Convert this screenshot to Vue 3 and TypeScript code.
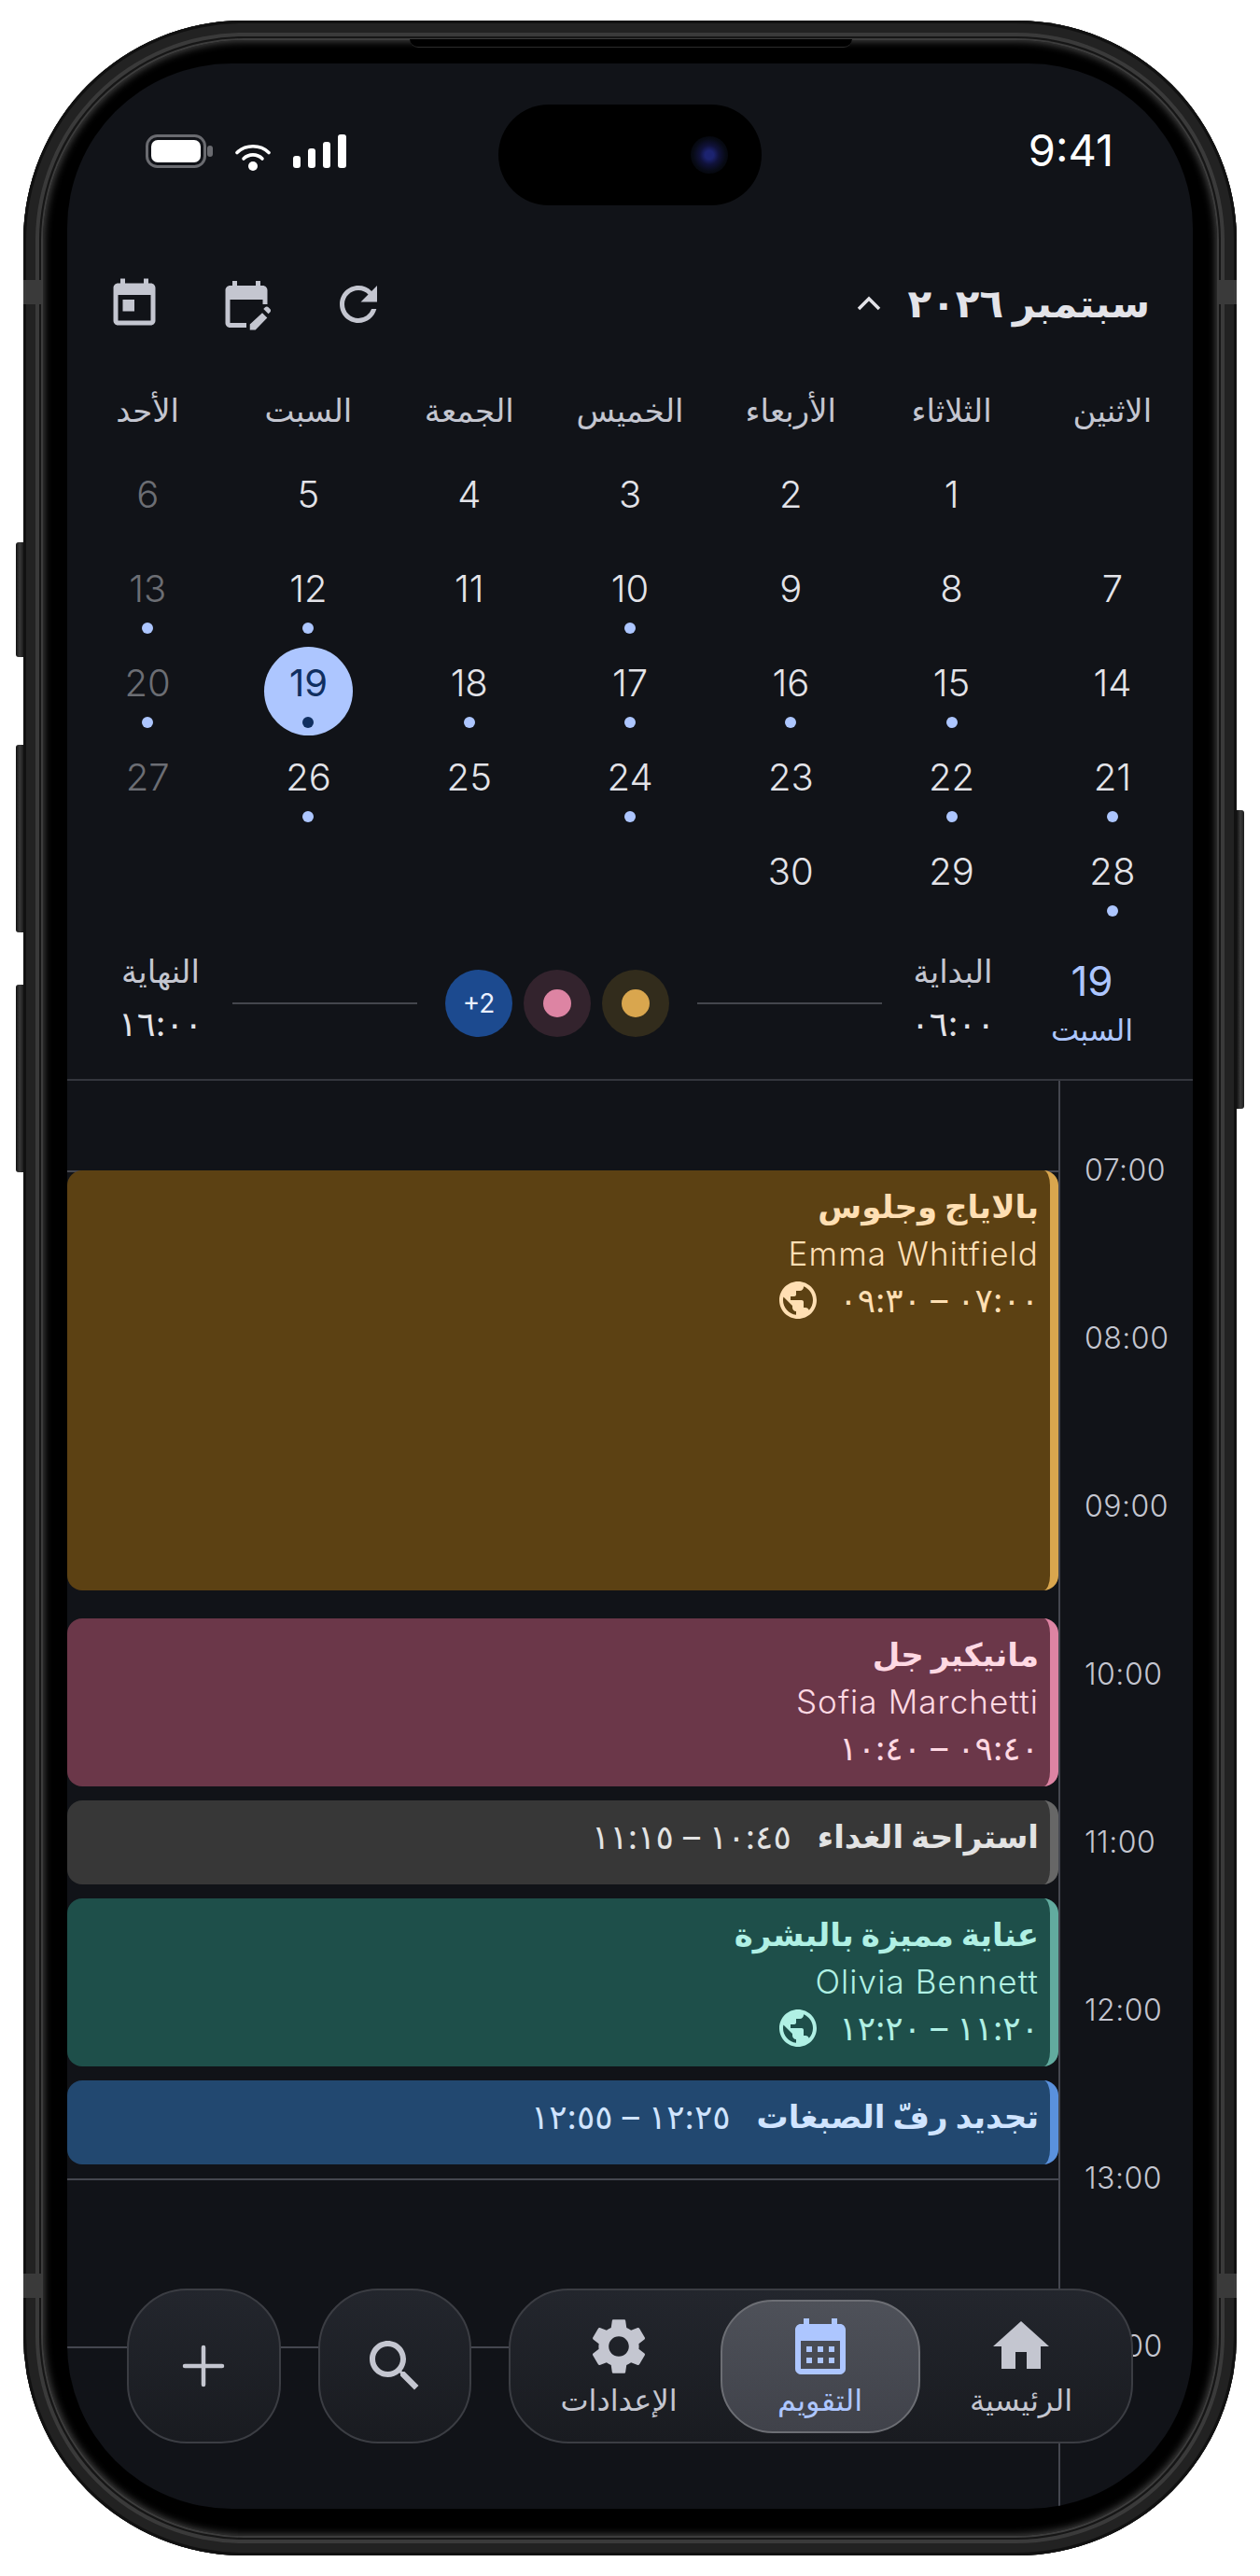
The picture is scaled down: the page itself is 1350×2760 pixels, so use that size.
<script setup lang="ts">
interface CalEvent {
  title: string
  name?: string
  time: string
  start: number
  end: number
  kind: string
  globe?: boolean
}

const weekdays = ['الاثنين', 'الثلاثاء', 'الأربعاء', 'الخميس', 'الجمعة', 'السبت', 'الأحد']
const dotted = [10, 12, 13, 15, 16, 17, 18, 19, 20, 21, 22, 24, 26, 28]
const days: (number | null)[] = [null]
for (let d = 1; d <= 30; d++) days.push(d)

const events: CalEvent[] = [
  { title: 'بالاياج وجلوس', name: 'Emma Whitfield', time: '٠٧:٠٠ – ٠٩:٣٠', start: 420, end: 570, kind: 'amber', globe: true },
  { title: 'مانيكير جل', name: 'Sofia Marchetti', time: '٠٩:٤٠ – ١٠:٤٠', start: 580, end: 640, kind: 'pink' },
  { title: 'استراحة الغداء', time: '١٠:٤٥ – ١١:١٥', start: 645, end: 675, kind: 'gray' },
  { title: 'عناية مميزة بالبشرة', name: 'Olivia Bennett', time: '١١:٢٠ – ١٢:٢٠', start: 680, end: 740, kind: 'teal', globe: true },
  { title: 'تجديد رفّ الصبغات', time: '١٢:٢٥ – ١٢:٥٥', start: 745, end: 775, kind: 'blue' },
]

const hours = ['07:00', '08:00', '09:00', '10:00', '11:00', '12:00', '13:00', '14:00']

function eventStyle(ev: CalEvent, i: number) {
  const prevEnd = i === 0 ? 420 : events[i - 1].end
  return { height: (ev.end - ev.start) * 3 + 'px', marginTop: (ev.start - prevEnd) * 3 + 'px' }
}

const globePath = 'M12 2C6.48 2 2 6.48 2 12s4.48 10 10 10 10-4.48 10-10S17.52 2 12 2zm-1 17.93c-3.95-.49-7-3.85-7-7.93 0-.62.08-1.21.21-1.79L9 15v1c0 1.1.9 2 2 2v1.93zm6.9-2.54c-.26-.81-1-1.39-1.9-1.39h-1v-3c0-.55-.45-1-1-1H8v-2h2c.55 0 1-.45 1-1V7h2c1.1 0 2-.9 2-2v-.41c2.93 1.19 5 4.06 5 7.41 0 2.08-.8 3.97-2.1 5.39z'
</script>

<template>
  <div class="page">
    <div class="phone">
      <span class="side-btn l1"></span>
      <span class="side-btn l2"></span>
      <span class="side-btn l3"></span>
      <span class="side-btn r1"></span>
      <span class="band bl-top"></span>
      <span class="band br-top"></span>
      <span class="band bl-bot"></span>
      <span class="band br-bot"></span>
      <span class="speaker"></span>

      <div class="bezel">
        <div class="screen">
          <div class="island"><span class="camera"></span></div>

          <div class="status">
            <div class="status-icons">
              <svg width="72" height="36" viewBox="0 0 72 36">
                <rect x="1.5" y="1.5" width="62" height="33" rx="11" fill="none" stroke="#6a6b70" stroke-width="3" />
                <rect x="6" y="6" width="53" height="24" rx="7" fill="#fff" />
                <rect x="66" y="12" width="6" height="12" rx="3" fill="#6a6b70" />
              </svg>
              <svg width="38" height="30" viewBox="0 0 38 30">
                <path d="M2 10.5C11 1.500 27 1.500 36 10.500" fill="none" stroke="#fff" stroke-width="3.6" stroke-linecap="round" />
                <path d="M9 17C14.500 11.500 23.500 11.500 29 17" fill="none" stroke="#fff" stroke-width="3.6" stroke-linecap="round" />
                <circle cx="19" cy="25" r="5" fill="#fff" />
              </svg>
              <svg width="57" height="36" viewBox="0 0 57 36">
                <rect x="0" y="23" width="8" height="13" rx="3" fill="#fff" />
                <rect x="16" y="15" width="8" height="21" rx="3" fill="#fff" />
                <rect x="32" y="8" width="8" height="28" rx="3" fill="#fff" />
                <rect x="48" y="0" width="9" height="36" rx="3" fill="#fff" />
              </svg>
            </div>
            <span class="clock">9:41</span>
          </div>

          <div class="toolbar">
            <div class="tool-icons">
              <svg width="60" height="60" viewBox="0 0 24 24"><path d="M19 3h-1V1h-2v2H8V1H6v2H5c-1.110 0-1.990.9-1.990 2L3 19c0 1.100.89 2 2 2h14c1.100 0 2-.9 2-2V5c0-1.100-.9-2-2-2zm0 16H5V8h14v11zM7 10h5v5H7z" /></svg>
              <svg width="60" height="60" viewBox="0 0 24 24"><path d="M5 10h14v2h2V6c0-1.100-.9-2-2-2h-1V2h-2v2H8V2H6v2H5c-1.110 0-1.990.9-1.990 2L3 20c0 1.100.89 2 2 2h7v-2H5V10zm17.130 4.010-.71-.71c-.39-.39-1.020-.39-1.410 0l-.71.71 2.120 2.120.71-.71c.39-.38.39-1.020 0-1.410zM13.500 20.640V23h2.360l5.060-5.160-2.120-2.120-5.300 4.920z" /></svg>
              <svg width="60" height="60" viewBox="0 0 24 24"><path d="M17.650 6.350A7.958 7.958 0 0 0 12 4c-4.420 0-7.990 3.580-7.990 8s3.570 8 7.990 8c3.730 0 6.840-2.550 7.730-6h-2.080A5.990 5.990 0 0 1 12 18c-3.310 0-6-2.690-6-6s2.690-6 6-6c1.660 0 3.140.69 4.220 1.780L13 11h7V4l-2.350 2.350z" /></svg>
            </div>
            <div class="month">
              <svg class="chevron" width="30" height="20" viewBox="0 0 30 20"><path d="M4 16 15 5l11 11" fill="none" stroke="#e3e3e8" stroke-width="3.500" /></svg>
              <span class="month-name">سبتمبر ٢٠٢٦</span>
            </div>
          </div>

          <div class="weekdays">
            <span v-for="w in weekdays" :key="w">{{ w }}</span>
          </div>

          <div class="days">
            <div
              v-for="(d, i) in days"
              :key="i"
              class="day"
              :class="{ sunday: i % 7 === 6, selected: d === 19 }"
            >
              <template v-if="d">
                <span class="day-num">{{ d }}</span>
                <span v-if="dotted.includes(d)" class="day-dot"></span>
              </template>
            </div>
          </div>

          <div class="summary">
            <div class="sum-date">
              <span class="sum-num">19</span>
              <span class="sum-day">السبت</span>
            </div>
            <div class="sum-edge">
              <span>البداية</span>
              <span class="sum-time">٠٦:٠٠</span>
            </div>
            <span class="sum-line"></span>
            <div class="sum-chips">
              <span class="chip amber"><i></i></span>
              <span class="chip pink"><i></i></span>
              <span class="chip more">+2</span>
            </div>
            <span class="sum-line"></span>
            <div class="sum-edge end">
              <span>النهاية</span>
              <span class="sum-time">١٦:٠٠</span>
            </div>
          </div>

          <div class="timeline">
            <div class="events">
              <div
                v-for="(ev, i) in events"
                :key="ev.title"
                class="event"
                :class="ev.kind"
                :style="eventStyle(ev, i)"
              >
                <template v-if="ev.name">
                  <div class="ev-title">{{ ev.title }}</div>
                  <div class="ev-name">{{ ev.name }}</div>
                  <div class="ev-time">
                    <span>{{ ev.time }}</span>
                    <svg v-if="ev.globe" width="48" height="48" viewBox="0 0 24 24"><path :d="globePath" /></svg>
                  </div>
                </template>
                <div v-else class="ev-row">
                  <span class="ev-title">{{ ev.title }}</span>
                  <span class="ev-time">{{ ev.time }}</span>
                </div>
              </div>
            </div>
            <div class="hours">
              <span v-for="h in hours" :key="h">{{ h }}</span>
            </div>
          </div>

          <div class="nav">
            <button class="round">
              <svg width="46" height="46" viewBox="0 0 46 46"><path d="M23 3v40M3 23h40" stroke="#c4c6d0" stroke-width="4.500" stroke-linecap="round" /></svg>
            </button>
            <button class="round">
              <svg width="72" height="72" viewBox="0 0 24 24"><path d="M15.500 14h-.79l-.28-.27C15.410 12.590 16 11.110 16 9.500 16 5.910 13.090 3 9.500 3S3 5.910 3 9.500 5.910 16 9.500 16c1.610 0 3.090-.59 4.230-1.570l.27.28v.79l5 4.990L20.490 19l-4.990-5zm-6 0C7.010 14 5 11.990 5 9.500S7.010 5 9.500 5 14 7.010 14 9.500 11.990 14 9.500 14z" /></svg>
            </button>
            <div class="tabs">
              <div class="tab">
                <svg width="72" height="72" viewBox="0 0 24 24"><path d="M19.140 12.940c.04-.3.06-.61.06-.94 0-.32-.02-.64-.07-.94l2.030-1.580c.18-.14.23-.41.12-.61l-1.920-3.320c-.12-.22-.37-.29-.59-.22l-2.390.96c-.5-.38-1.030-.7-1.620-.94l-.36-2.540c-.04-.24-.24-.41-.48-.41h-3.840c-.24 0-.43.17-.47.41l-.36 2.540c-.59.24-1.130.57-1.620.94l-2.390-.96c-.22-.08-.47 0-.59.22L2.740 8.870c-.12.21-.08.47.12.61l2.030 1.580c-.05.3-.09.63-.09.94s.02.64.07.94l-2.030 1.580c-.18.14-.23.41-.12.61l1.920 3.320c.12.22.37.29.59.22l2.390-.96c.5.38 1.030.7 1.620.94l.36 2.540c.05.24.24.41.48.41h3.840c.24 0 .44-.17.47-.41l.36-2.540c.59-.24 1.130-.56 1.620-.94l2.390.96c.22.08.47 0 .59-.22l1.920-3.320c.12-.22.07-.47-.12-.61l-2.010-1.580zM12 15.600c-1.980 0-3.600-1.620-3.600-3.600s1.620-3.600 3.600-3.600 3.600 1.620 3.600 3.600-1.620 3.600-3.600 3.600z" /></svg>
                <span>الإعدادات</span>
              </div>
              <div class="tab active">
                <svg width="72" height="72" viewBox="0 0 24 24"><path d="M19 4h-1V2h-2v2H8V2H6v2H5c-1.100 0-2 .9-2 2v14c0 1.100.9 2 2 2h14c1.100 0 2-.9 2-2V6c0-1.100-.9-2-2-2zm0 16H5V10h14v10zM9 14H7v-2h2v2zm4 0h-2v-2h2v2zm4 0h-2v-2h2v2zm-8 4H7v-2h2v2zm4 0h-2v-2h2v2zm4 0h-2v-2h2v2z" /></svg>
                <span>التقويم</span>
              </div>
              <div class="tab">
                <svg width="72" height="72" viewBox="0 0 24 24"><path d="M10 20v-6h4v6h5v-8h3L12 3 2 12h3v8z" /></svg>
                <span>الرئيسية</span>
              </div>
            </div>
          </div>
        </div>
      </div>
    </div>
  </div>
</template>

<style>
html, body {
  margin: 0;
  background: #fff;
}
</style>

<style scoped>
.page {
  width: 1350px;
  height: 2760px;
  padding: 22px 25px;
  box-sizing: border-box;
  font-family: Inter, "DejaVu Sans", sans-serif;
}

.phone {
  position: relative;
  width: 1300px;
  height: 2716px;
  padding: 21px;
  box-sizing: border-box;
  border-radius: 236px;
  background: #161616;
  box-shadow: inset 0 0 0 3px #111, inset 0 0 0 13px #222, inset 0 0 0 17px #3a3a3a;
}

.side-btn {
  position: absolute;
  width: 8px;
  background: linear-gradient(90deg, #111, #3a3a3a 50%, #1c1c1c);
  border-radius: 3px 0 0 3px;
}
.l1 { left: -8px; top: 559px; height: 123px; }
.l2 { left: -8px; top: 776px; height: 201px; }
.l3 { left: -8px; top: 1033px; height: 201px; }
.r1 { right: -8px; top: 846px; height: 320px; border-radius: 0 3px 3px 0; }

.band {
  position: absolute;
  width: 19px;
  height: 26px;
  background: #3a3a3a;
}
.bl-top { left: 0; top: 278px; }
.br-top { right: 0; top: 278px; }
.bl-bot { left: 0; top: 2414px; }
.br-bot { right: 0; top: 2414px; }

.speaker {
  position: absolute;
  left: 414px;
  top: 20px;
  width: 474px;
  height: 8px;
  background: #000;
  border-radius: 0 0 14px 14px;
  border-bottom: 1px solid #2c2c2c;
  z-index: 2;
}

.bezel {
  height: 100%;
  padding: 25px 26px;
  box-sizing: border-box;
  border-radius: 216px;
  background: #000;
  box-shadow: 0 0 0 2px #3c3c3c, inset 0 0 8px 1px #4a4a4a;
}

.screen {
  position: relative;
  width: 1206px;
  height: 2620px;
  overflow: hidden;
  border-radius: 176px;
  background: #111318;
  color: #e3e3e8;
  display: flex;
  flex-direction: column;
}

.island {
  position: absolute;
  left: 462px;
  top: 44px;
  width: 282px;
  height: 108px;
  border-radius: 54px;
  background: #000;
}
.camera {
  position: absolute;
  right: 36px;
  top: 34px;
  width: 40px;
  height: 40px;
  border-radius: 50%;
  background: radial-gradient(circle, #1c2370 0 16%, #10123a 36%, #070a14 62%, #000 100%);
}

.status {
  height: 207px;
  flex: none;
  display: flex;
  justify-content: space-between;
  padding: 76px 85px 0 84px;
  box-sizing: border-box;
}
.status-icons {
  display: flex;
  align-items: flex-end;
  gap: 24px;
  height: 36px;
}
.status-icons svg:nth-child(2) { margin-bottom: -3px; }
.clock {
  font-size: 47px;
  line-height: 46px;
  font-weight: 400;
  color: #fff;
  margin-top: -6px;
}

.toolbar {
  height: 100px;
  flex: none;
  display: flex;
  justify-content: space-between;
  align-items: center;
  padding: 0 46px 0 42px;
}
.tool-icons {
  display: flex;
  gap: 60px;
  margin-top: 2px;
}
.tool-icons svg { fill: #c4c6d0; }
.month {
  display: flex;
  align-items: center;
  gap: 26px;
}
.month-name {
  direction: rtl;
  font-size: 42px;
  line-height: 50px;
  font-weight: 700;
  color: #e3e3e8;
}

.weekdays {
  height: 50px;
  margin-top: 40px;
  flex: none;
  display: grid;
  grid-template-columns: repeat(7, 1fr);
  direction: rtl;
  text-align: center;
  font-size: 34px;
  line-height: 50px;
  color: #c4c6d0;
}

.days {
  margin-top: 40px;
  flex: none;
  display: grid;
  grid-template-columns: repeat(7, 1fr);
  grid-auto-rows: 101px;
  direction: rtl;
}
.day {
  position: relative;
  display: flex;
  flex-direction: column;
  align-items: center;
}
.day-num {
  position: relative;
  font-size: 40px;
  line-height: 50px;
  font-weight: 300;
  color: #e3e3e8;
}
.day-dot {
  position: relative;
  width: 12px;
  height: 12px;
  margin-top: 11px;
  border-radius: 50%;
  background: #adc6ff;
}
.sunday .day-num { color: #6c6e74; }
.selected::before {
  content: '';
  position: absolute;
  left: 50%;
  top: -14px;
  width: 95px;
  height: 95px;
  margin-left: -47px;
  border-radius: 50%;
  background: #adc6ff;
}
.selected .day-num { color: #102f60; font-weight: 400; }
.selected .day-dot { background: #102f60; }

.summary {
  height: 146px;
  flex: none;
  display: flex;
  align-items: center;
  direction: rtl;
  padding: 0 63px 0 0;
  border-bottom: 2px solid #34363d;
  box-sizing: content-box;
}
.sum-date {
  width: 90px;
  display: flex;
  flex-direction: column;
  align-items: center;
  margin-left: 59px;
  margin-top: -14px;
}
.sum-num {
  font-size: 44px;
  line-height: 56px;
  color: #adc6ff;
}
.sum-day {
  font-size: 32px;
  line-height: 50px;
  color: #adc6ff;
}
.sum-edge {
  width: 90px;
  display: flex;
  flex-direction: column;
  align-items: center;
  gap: 6px;
  font-size: 34px;
  line-height: 50px;
  color: #c4c6d0;
  margin-top: -28px;
  white-space: nowrap;
}
.sum-time {
  font-size: 37px;
  color: #e3e3e8;
}
.sum-edge.end { margin-right: 32px; }
.sum-line {
  width: 198px;
  height: 2px;
  margin-right: 31px;
  background: #44464d;
  margin-top: -16px;
}
.sum-chips {
  display: flex;
  gap: 12px;
  margin-right: 30px;
  margin-top: -16px;
}
.sum-chips + .sum-line { margin-right: 30px; }
.chip {
  width: 72px;
  height: 72px;
  border-radius: 50%;
  display: flex;
  align-items: center;
  justify-content: center;
  direction: ltr;
  font-size: 28px;
}
.chip i {
  width: 30px;
  height: 30px;
  border-radius: 50%;
}
.chip.amber { background: #322c1c; }
.chip.amber i { background: #d9a64e; }
.chip.pink { background: #33232d; }
.chip.pink i { background: #dd84a3; }
.chip.more { background: #1c4a8f; color: #eaf0ff; }

.timeline {
  flex: 1;
  display: flex;
  min-height: 0;
}
.events {
  flex: none;
  width: 1064px;
  padding-top: 96px;
  box-sizing: border-box;
  border-right: 2px solid #44464f;
  background: linear-gradient(#44464f 0 2px, transparent 2px) 0 96px / 100% 180px repeat-y;
  direction: rtl;
}
.event {
  width: 1062px;
  box-sizing: border-box;
  padding: 14px 12px 0 0;
  border-right: 9px solid;
  border-radius: 16px;
  overflow: hidden;
}
.ev-title {
  font-size: 34px;
  line-height: 50px;
  font-weight: 700;
}
.ev-name {
  font-size: 35px;
  line-height: 50px;
  font-weight: 300;
  letter-spacing: 1.1px;
  direction: ltr;
  text-align: right;
}
.ev-time {
  font-size: 36px;
  line-height: 50px;
  display: flex;
  align-items: center;
  gap: 20px;
}
.ev-row {
  display: flex;
  align-items: center;
  gap: 28px;
}
.amber.event { background: #5c4113; border-color: #d9a64e; color: #ffdfb3; fill: #ffdfb3; }
.pink.event { background: #6b3749; border-color: #dd84a3; color: #ffd9e3; fill: #ffd9e3; }
.gray.event { background: #373737; border-color: #676767; color: #e3e3e3; fill: #e3e3e3; }
.teal.event { background: #1e4f4a; border-color: #62ab9f; color: #b0f0e4; fill: #b0f0e4; }
.blue.event { background: #224870; border-color: #5a91dd; color: #d0e4ff; fill: #d0e4ff; }

.hours {
  flex: 1;
  padding: 6px 0 0 26px;
  display: flex;
  flex-direction: column;
  font-size: 32px;
  font-weight: 300;
  letter-spacing: 0.5px;
  color: #c4c6d0;
}
.hours span {
  height: 180px;
  flex: none;
  line-height: 180px;
}

.nav {
  position: absolute;
  left: 64px;
  top: 2384px;
  display: flex;
  gap: 40px;
  font-family: Inter, "DejaVu Sans", sans-serif;
}
.round,
.tabs {
  height: 166px;
  box-sizing: border-box;
  border: 2px solid #3b3d43;
  border-radius: 64px;
  background: linear-gradient(180deg, #23262d, #191b20);
}
.round {
  width: 164.5px;
  padding: 0;
  display: flex;
  align-items: center;
  justify-content: center;
}
.round svg { fill: #c4c6d0; }
.tabs {
  width: 669px;
  display: flex;
  align-items: center;
  justify-content: space-between;
  padding: 0 11px 0 9px;
}
.tab {
  width: 214px;
  height: 143px;
  box-sizing: border-box;
  display: flex;
  flex-direction: column;
  align-items: center;
  padding-top: 14px;
  border-radius: 56px;
  font-size: 32px;
  line-height: 40px;
  white-space: nowrap;
  color: #c4c6d0;
  fill: #c4c6d0;
}
.tab svg { flex: none; margin-bottom: 2px; }
.tab.active {
  background: linear-gradient(180deg, #4e5159, #40424a);
  border: 2px solid #6c6e74;
  padding-top: 12px;
  color: #adc6ff;
  fill: #adc6ff;
}
</style>
